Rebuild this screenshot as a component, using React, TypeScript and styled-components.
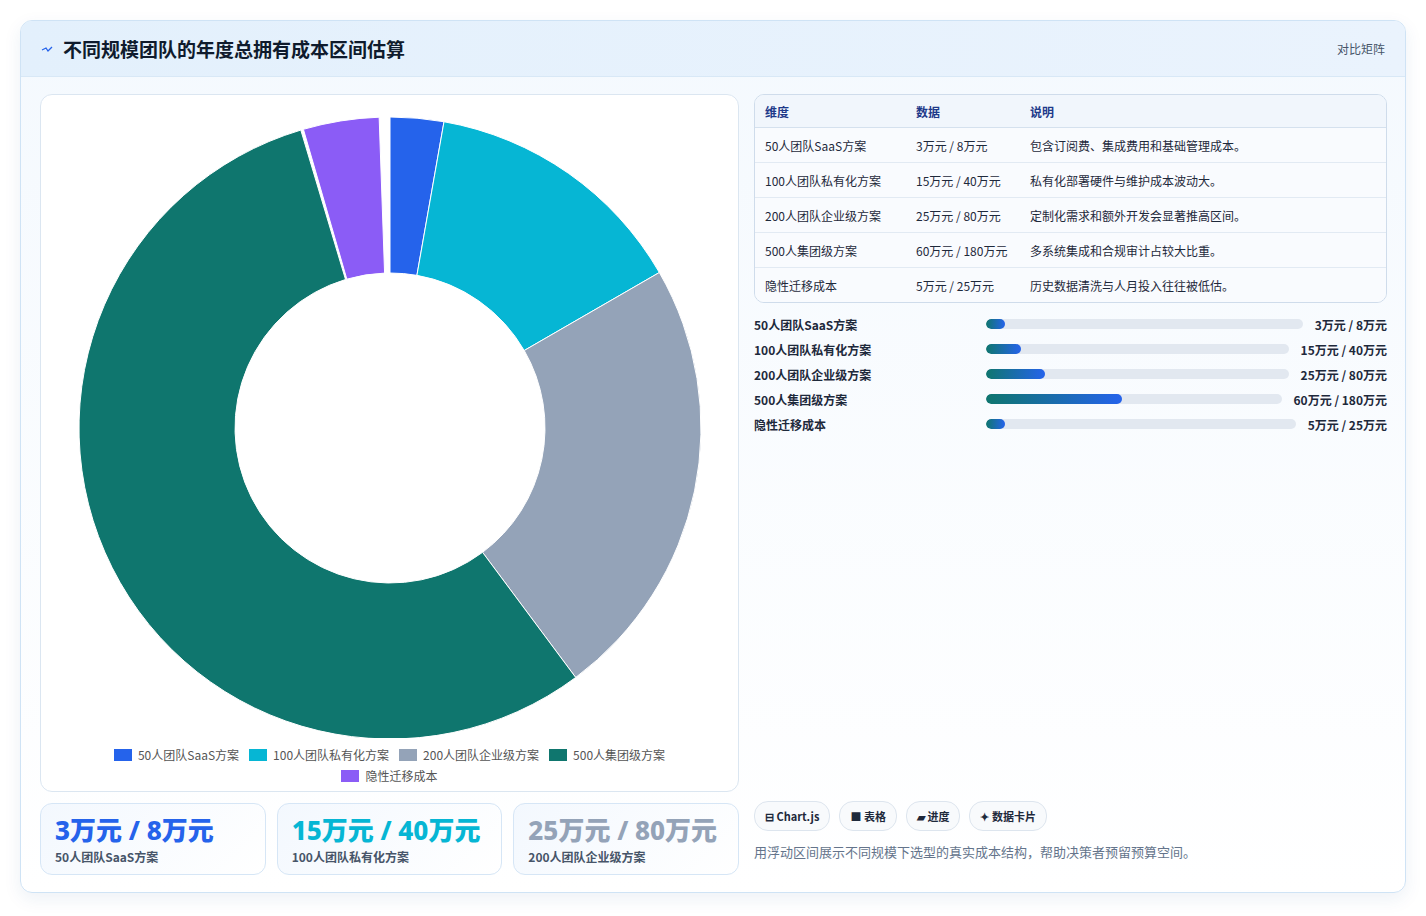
import React from "react";
import styled, { createGlobalStyle } from "styled-components";

const G = createGlobalStyle`
  body { margin: 0; background: #fff; font-family: "Noto Sans CJK SC", "Noto Sans", sans-serif; }
`;
const Page = styled.div`padding: 20px 20px 22px 20px;`;
const Card = styled.div`
  border: 1px solid #cfe3f5; border-radius: 12px; overflow: hidden;
  background: linear-gradient(180deg, #f4f9fe 0%, #ffffff 100%);
  box-shadow: 0 6px 18px rgba(30,80,140,0.08);
`;
const Header = styled.div`
  height: 55px; display: flex; align-items: center; justify-content: space-between;
  padding: 0 20px; background: linear-gradient(90deg, #e3f0fc, #eaf3fd);
  border-bottom: 1px solid #d8e8f6;
`;
const Title = styled.h1`
  margin: 0; font-size: 19px; font-weight: 700; color: #0f1b2d; display: flex; align-items: center; gap: 10px;
`;
const Hint = styled.span`font-size: 12px; color: #475569;`;
const Body = styled.div`display: grid; grid-template-columns: 699px 1fr; gap: 15px; padding: 17px 18px 17px 19px;`;
const Col = styled.div`display: flex; flex-direction: column;`;
const ChartBox = styled.div`
  height: 698px; background: #fff; border: 1px solid #dbe6f1; border-radius: 12px;
  display: flex; flex-direction: column; align-items: center; box-sizing: border-box; padding-top: 11px;
`;
const Legend = styled.div`display: flex; flex-wrap: wrap; justify-content: center; gap: 4px 10px; width: 600px; margin-top: 8px;`;
const LegItem = styled.span`display: flex; align-items: center; gap: 6px; font-size: 12px; color: #555;`;
const Sw = styled.i<{ c: string }>`width: 18px; height: 12px; background: ${p => p.c}; display: inline-block;`;
const Stats = styled.div`display: grid; grid-template-columns: repeat(3, 1fr); gap: 11px; margin-top: 11px;`;
const Stat = styled.div`
  height: 72px; box-sizing: border-box; border: 1px solid #d6e6f6; border-radius: 12px;
  background: linear-gradient(135deg, #f3f8fe, #fff); padding: 10px 14px;
`;
const Big = styled.div<{ c: string }>`font-size: 26px; font-weight: 800; color: ${p => p.c}; line-height: 32px; font-family: "Noto Sans", "Noto Sans CJK SC", sans-serif;`;
const Small = styled.div`font-size: 12px; font-weight: 700; color: #475569; margin-top: 2px;`;
const Table = styled.table`
  width: 100%; border-collapse: separate; border-spacing: 0; border: 1px solid #cfdceb; border-radius: 10px; overflow: hidden;
  font-size: 12px; color: #1e293b;
  th { text-align: left; font-weight: 700; color: #1e3a8a; background: #f1f6fc; height: 32px; border-bottom: 1px solid #d5e1ee; }
  td { height: 34px; border-bottom: 1px solid #e2eaf3; background: #f9fbfe; }
  tr:last-child td { border-bottom: none; }
  th, td { padding: 0 10px; }
`;
const Bars = styled.div`display: flex; flex-direction: column; gap: 7px; margin-top: 12px;`;
const BarRow = styled.div`display: flex; align-items: center; gap: 12px; height: 18px; font-size: 12px; font-weight: 700; color: #1e293b;`;
const BarLabel = styled.span`width: 220px; white-space: nowrap;`;
const Track = styled.div`flex: 1; height: 10px; border-radius: 5px; background: #e2e8f0; overflow: hidden;`;
const Fill = styled.div`height: 100%; border-radius: 5px; background: linear-gradient(90deg, #0f766e, #2563eb);`;
const Spacer = styled.div`flex: 1;`;
const Tags = styled.div`display: flex; gap: 9px;`;
const Tag = styled.span`
  height: 28px; padding: 0 10px; border: 1px solid #dde5ee; border-radius: 14px; background: #f8fafc;
  display: flex; align-items: center; font-size: 11px; font-weight: 700; color: #1e293b; gap: 4px;
`;
const Caption = styled.p`margin: 11px 0 14px; font-size: 13px; color: #64748b;`;

const rows = [
  ["50人团队SaaS方案", "3万元 / 8万元", "包含订阅费、集成费用和基础管理成本。", 6, "#2563eb", 3],
  ["100人团队私有化方案", "15万元 / 40万元", "私有化部署硬件与维护成本波动大。", 11.5, "#06b6d4", 15],
  ["200人团队企业级方案", "25万元 / 80万元", "定制化需求和额外开发会显著推高区间。", 19.5, "#94a3b8", 25],
  ["500人集团级方案", "60万元 / 180万元", "多系统集成和合规审计占较大比重。", 46, "#0f766e", 60],
  ["隐性迁移成本", "5万元 / 25万元", "历史数据清洗与人月投入往往被低估。", 6, "#8b5cf6", 5],
] as const;

function arc(a0: number, a1: number, R: number, r: number, cx: number, cy: number) {
  const p = (a: number, rad: number) => {
    const t = (a - 90) * Math.PI / 180;
    return `${cx + rad * Math.cos(t)} ${cy + rad * Math.sin(t)}`;
  };
  const l = a1 - a0 > 180 ? 1 : 0;
  return `M ${p(a0, R)} A ${R} ${R} 0 ${l} 1 ${p(a1, R)} L ${p(a1, r)} A ${r} ${r} 0 ${l} 0 ${p(a0, r)} Z`;
}

function Donut() {
  const total = 108;
  let a = 0;
  const segs = rows.map((row, i) => {
    const s = (row[5] / total) * 360;
    let a0 = a, a1 = a + s;
    a = a1;
    if (i === 4) { a0 += 0.5; a1 -= 2; }
    return <path key={i} d={arc(a0, a1, 311, 155, 350, 322)} fill={row[4]} stroke="#fff" strokeWidth={1} />;
  });
  return <svg width="700" height="632" viewBox="0 0 700 632">{segs}</svg>;
}

export default function App() {
  return (
    <Page>
      <G />
      <Card>
        <Header>
          <Title>
            <svg width="12" height="8" viewBox="0 0 12 8"><path d="M1 5 L5 3 L7 6 L11 2" stroke="#2563eb" strokeWidth="1.3" fill="none" /></svg>
            不同规模团队的年度总拥有成本区间估算
          </Title>
          <Hint>对比矩阵</Hint>
        </Header>
        <Body>
          <Col>
            <ChartBox>
              <Donut />
              <Legend>
                {rows.map(r => <LegItem key={r[0]}><Sw c={r[4]} />{r[0]}</LegItem>)}
              </Legend>
            </ChartBox>
            <Stats>
              {rows.slice(0, 3).map(r => (
                <Stat key={r[0]}><Big c={r[4]}>{r[1]}</Big><Small>{r[0]}</Small></Stat>
              ))}
            </Stats>
          </Col>
          <Col>
            <Table>
              <thead><tr><th style={{ width: 131 }}>维度</th><th style={{ width: 94 }}>数据</th><th>说明</th></tr></thead>
              <tbody>
                {rows.map(r => <tr key={r[0]}><td>{r[0]}</td><td>{r[1]}</td><td>{r[2]}</td></tr>)}
              </tbody>
            </Table>
            <Bars>
              {rows.map(r => (
                <BarRow key={r[0]}>
                  <BarLabel>{r[0]}</BarLabel>
                  <Track><Fill style={{ width: `${r[3]}%` }} /></Track>
                  <span>{r[1]}</span>
                </BarRow>
              ))}
            </Bars>
            <Spacer />
            <Tags>
              <Tag>⊟ Chart.js</Tag><Tag>■ 表格</Tag><Tag>▰ 进度</Tag><Tag>✦ 数据卡片</Tag>
            </Tags>
            <Caption>用浮动区间展示不同规模下选型的真实成本结构，帮助决策者预留预算空间。</Caption>
          </Col>
        </Body>
      </Card>
    </Page>
  );
}
